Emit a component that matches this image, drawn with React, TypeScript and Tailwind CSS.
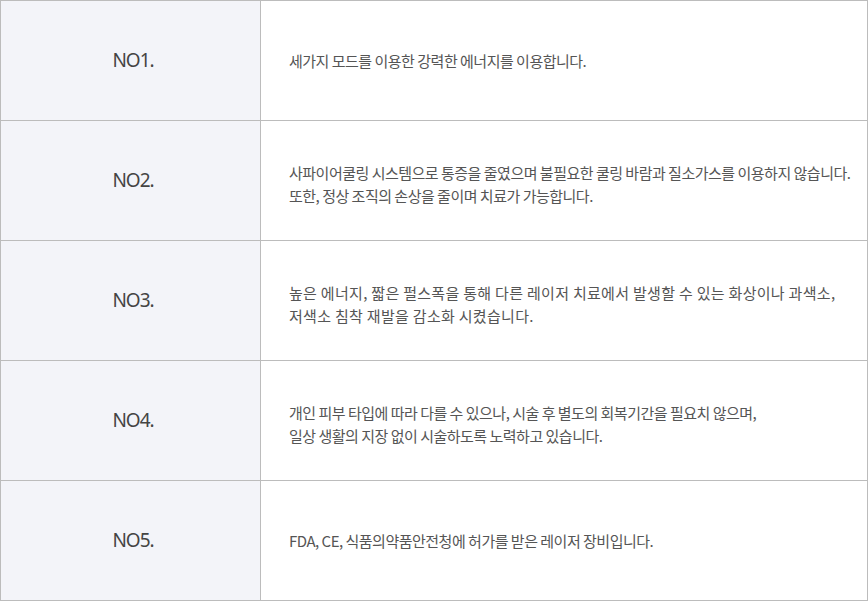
const rows = [
  { no: "NO1.", lines: ["세가지 모드를 이용한 강력한 에너지를 이용합니다."], tight: true },
  {
    no: "NO2.",
    lines: [
      "사파이어쿨링 시스템으로 통증을 줄였으며 불필요한 쿨링 바람과 질소가스를 이용하지 않습니다.",
      "또한, 정상 조직의 손상을 줄이며 치료가 가능합니다.",
    ],
    tight: true,
  },
  {
    no: "NO3.",
    lines: [
      "높은 에너지, 짧은 펄스폭을 통해 다른 레이저 치료에서 발생할 수 있는 화상이나 과색소,",
      "저색소 침착 재발을 감소화 시켰습니다.",
    ],
    tight: false,
  },
  {
    no: "NO4.",
    lines: [
      "개인 피부 타입에 따라 다를 수 있으나, 시술 후 별도의 회복기간을 필요치 않으며,",
      "일상 생활의 지장 없이 시술하도록 노력하고 있습니다.",
    ],
    tight: true,
  },
  { no: "NO5.", lines: ["FDA, CE, 식품의약품안전청에 허가를 받은 레이저 장비입니다."], tight: true },
];

export default function App() {
  return (
    <div className="w-[868px] bg-white border-x border-t border-[#bcbcbc] font-['Noto_Sans','Noto_Sans_CJK_KR',sans-serif]">
      {rows.map((r) => (
        <div key={r.no} className="flex h-[120px] border-b border-[#bcbcbc]">
          <div className="w-[260px] shrink-0 bg-[#f3f4f9] border-r border-[#bcbcbc] flex items-center justify-center pl-[5px] text-[19px] text-[#444] tracking-[-1px]">
            {r.no}
          </div>
          <div
            className={`flex-1 flex flex-col justify-center pl-[28px] text-[15px] leading-[23px] text-[#555] font-['Noto_Sans_CJK_KR',sans-serif] ${
              r.tight ? "tracking-[-0.5px]" : "tracking-[0.3px]"
            } ${r.lines.length > 1 ? "pt-[6px]" : ""}`}
          >
            {r.lines.map((l) => (
              <p key={l} className="whitespace-nowrap">{l}</p>
            ))}
          </div>
        </div>
      ))}
    </div>
  );
}
